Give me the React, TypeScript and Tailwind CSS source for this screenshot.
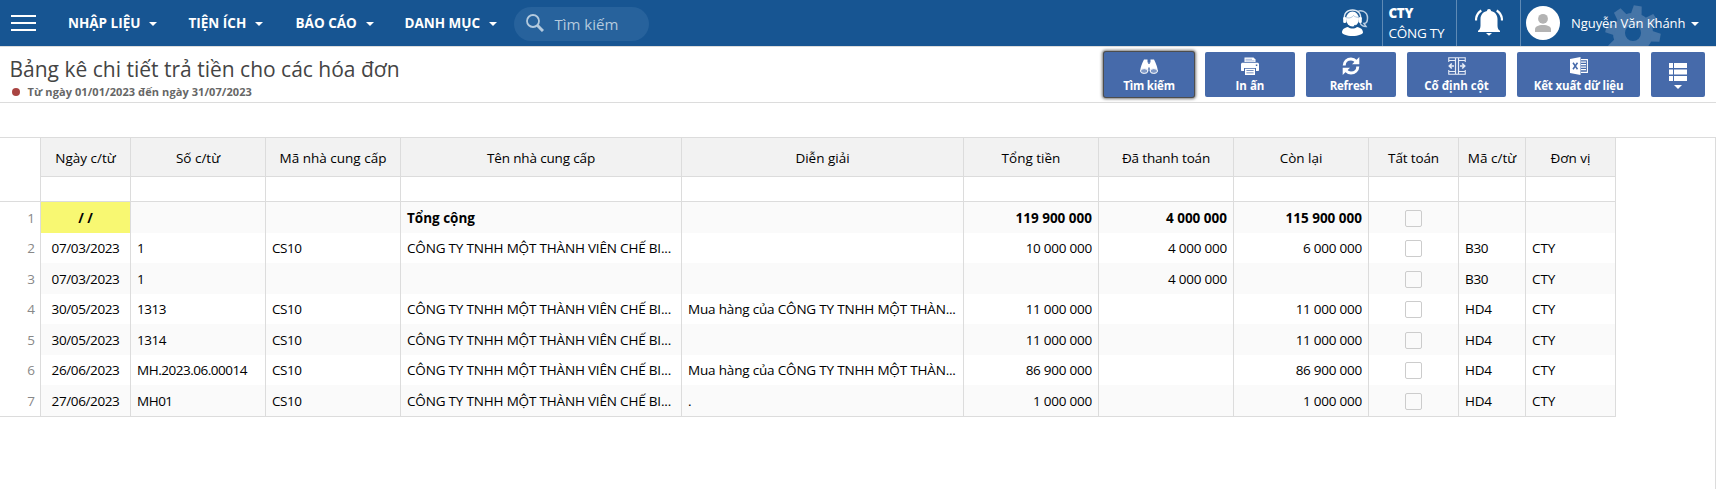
import React from "react";

function Caret({ className = "" }: { className?: string }) {
  return (
    <svg className={"shrink-0 " + className} width="8" height="4" viewBox="0 0 8 4" fill="currentColor">
      <path d="M0 0h8L4 4z" />
    </svg>
  );
}

function HeadsetIcon() {
  return (
    <svg width="28" height="28" viewBox="0 0 28 28" fill="none">
      <path d="M17 2.500c2-1.500 9.500-1 9.500 6.500 0 4-2 5.500-3.500 5.500l2 3c-3 0-5-1.500-6-3.500" stroke="#b9cde2" strokeWidth="1.500" />
      <ellipse cx="11.500" cy="10" rx="6.500" ry="7.500" fill="#fff" />
      <path d="M3.500 11C2.500 4.500 6 1 11.500 1s9 3.500 8 10" stroke="#dfe9f3" strokeWidth="1.400" />
      <path d="M6 8.800c3 .6 5.500-.6 6.500-2.300 1 1.300 3 1.800 5 1.800" stroke="#8fb0d0" strokeWidth="0.700" />
      <rect x="2.200" y="8" width="3" height="6" rx="1.300" fill="#fff" />
      <rect x="17.800" y="8" width="3" height="6" rx="1.300" fill="#fff" />
      <path d="M18.500 14c-.5 1.800-2.500 2.500-5.500 2.500" stroke="#175592" strokeWidth="0.800" />
      <path d="M1 23.500c0-3 2.500-5 6-5.500 2.500 2 6.500 2 9 0 3.500.5 6 2.500 6 5.500 0 1.500-4.500 3.500-10.500 3.500S1 25 1 23.500z" fill="#fff" />
    </svg>
  );
}

function BellIcon() {
  return (
    <svg width="28" height="27" viewBox="0 0 28 27" fill="#fff">
      <path d="M14 0c1.200 0 2 .8 2 2 4 .8 6.500 4 6.500 8v6.500c0 2.500.8 4.500 2.500 5.200v1.300H3v-1.300c1.700-.7 2.500-2.700 2.500-5.200V10c0-4 2.500-7.200 6.500-8 0-1.200.8-2 2-2z" />
      <path d="M11 24h6l-3 2.700z" />
      <path d="M1 11.500C1 7 3 3.500 6.300 1.500M27 11.500C27 7 25 3.500 21.700 1.500" fill="none" stroke="#fff" strokeWidth="2.200" />
    </svg>
  );
}

const teeth = [10, 55, 100, 145, 190, 235, 280, 325];

function GearBackdrop() {
  return (
    <svg className="absolute left-[84px] top-[5px]" width="56" height="41" viewBox="0 0 56 41">
      <g fill="#4675a7">
        <circle cx="28" cy="28" r="14" fill="none" stroke="#4675a7" strokeWidth="12" />
        {teeth.map((a) => (
          <path key={a} d="M22.500 10l1.500-9.500h8L33.500 10z" transform={`rotate(${a} 28 28)`} />
        ))}
      </g>
    </svg>
  );
}

function BinocularsIcon() {
  return (
    <svg width="18" height="15" viewBox="0 0 18 15" fill="#fff">
      <path d="M4 .5h3.500v3H8.300V12H.3C.3 8.500 2 4.500 4 .5zM14 .5h-3.500v3H9.700V12h8C17.700 8.500 16 4.500 14 .5z" />
      <rect x="7" y="5" width="4" height="3.500" />
      <ellipse cx="4.200" cy="12" rx="3.700" ry="2.400" fill="#7f98c6" stroke="#fff" strokeWidth="1" />
      <ellipse cx="13.800" cy="12" rx="3.700" ry="2.400" fill="#7f98c6" stroke="#fff" strokeWidth="1" />
    </svg>
  );
}

function PrinterIcon() {
  return (
    <svg width="18" height="18" viewBox="0 0 18 18" fill="#fff">
      <path d="M3.500 5V.6h9l2 2V5z" />
      <path d="M4.500 2.300h6.500M4.500 3.900h9" stroke="#8ea5d0" strokeWidth="0.800" />
      <path fillRule="evenodd" d="M1.500 5.800h15c.8 0 1.500.7 1.500 1.500V13c0 .6-.4 1-1 1h-2v-3H3v3H1c-.6 0-1-.4-1-1V7.300c0-.8.7-1.500 1.500-1.500zm13.300 1.700v1.500h1.500V7.500z" />
      <path fillRule="evenodd" d="M4 11.800h10V18H4zm1.400 1.400v.9h7.200v-.9zm0 2.200v.9h7.200v-.9z" />
    </svg>
  );
}

function RefreshIcon() {
  return (
    <svg width="18" height="18" viewBox="0 0 18 18" fill="none">
      <path d="M2.200 8.500C2.300 4.700 5.200 2 9 2c2 0 3.700.8 5 2.200" stroke="#fff" strokeWidth="3" />
      <path d="M17.300 0v7.300H10z" fill="#fff" />
      <path d="M15.800 9.500C15.700 13.300 12.800 16 9 16c-2 0-3.700-.8-5-2.200" stroke="#fff" strokeWidth="3" />
      <path d="M.7 18v-7.300H8z" fill="#fff" />
    </svg>
  );
}

function FreezeIcon() {
  return (
    <svg width="18" height="18" viewBox="0 0 18 18" fill="none" stroke="#e6ecf6">
      <path d="M.75 5V.75h16.500V5M.75 13v4.250h16.500V13M1 3.500h6.500M10.500 3.500H17M1 14.500h6.500M10.500 14.500H17" strokeWidth="1.100" />
      <path d="M7.500 1v16M10.500 1v16" strokeWidth="1.200" />
      <path d="M6 9H1.200M3.800 6.500L1.300 9l2.500 2.500M12 9h4.800M14.200 6.500L16.700 9l-2.500 2.500" strokeWidth="1.600" />
    </svg>
  );
}

function ExcelIcon() {
  return (
    <svg width="18" height="18" viewBox="0 0 18 18" fill="none">
      <path d="M0 2l10.500-2v18L0 16z" fill="#fff" />
      <path d="M11 2.600h6.400v12.800H11" stroke="#fff" strokeWidth="1.100" />
      <path d="M11 5.200h5M11 7.700h5M11 10.200h5M11 12.700h5" stroke="#fff" strokeWidth="1.300" />
      <path d="M3 5.800l4.500 6.500M7.500 5.800L3 12.300" stroke="#466aaa" strokeWidth="1.500" />
    </svg>
  );
}

function ListIcon() {
  return (
    <svg width="18" height="18" viewBox="0 0 18 18" fill="#fff">
      <path d="M0 0h4v5H0zM5 0h13v5H5zM0 6.500h4v5H0zM5 6.500h13v5H5zM0 13h4v5H0zM5 13h13v5H5z" />
    </svg>
  );
}

const menus = [
  { label: "NHẬP LIỆU", cls: "w-[120.500px]" },
  { label: "TIỆN ÍCH", cls: "w-[107px]" },
  { label: "BÁO CÁO", cls: "w-[109px]" },
  { label: "DANH MỤC", cls: "w-[109px]" },
];

const actions = [
  { label: "Tìm kiếm", icon: <BinocularsIcon />, cls: "w-[90px] shadow-[0_0_0_1px_#4d4d4d,0_0_3px_2px_#777] tracking-[-0.2px]" },
  { label: "In ấn", icon: <PrinterIcon />, cls: "w-[90px]" },
  { label: "Refresh", icon: <RefreshIcon />, cls: "w-[90px] tracking-[-0.2px]" },
  { label: "Cố định cột", icon: <FreezeIcon />, cls: "w-[99px]" },
  { label: "Kết xuất dữ liệu", icon: <ExcelIcon />, cls: "w-[123px] tracking-[-0.140px]" },
];

const headers = [
  "Ngày c/từ", "Số c/từ", "Mã nhà cung cấp", "Tên nhà cung cấp", "Diễn giải", "Tổng tiền",
  "Đã thanh toán", "Còn lại", "Tất toán", "Mã c/từ", "Đơn vị",
];

const vendor = "CÔNG TY TNHH MỘT THÀNH VIÊN CHẾ BI...";
const purchase = "Mua hàng của CÔNG TY TNHH MỘT THÀN...";

const rows: string[][] = [
  ["/ /", "", "", "Tổng cộng", "", "119 900 000", "4 000 000", "115 900 000", "", "", ""],
  ["07/03/2023", "1", "CS10", vendor, "", "10 000 000", "4 000 000", "6 000 000", "", "B30", "CTY"],
  ["07/03/2023", "1", "", "", "", "", "4 000 000", "", "", "B30", "CTY"],
  ["30/05/2023", "1313", "CS10", vendor, purchase, "11 000 000", "", "11 000 000", "", "HD4", "CTY"],
  ["30/05/2023", "1314", "CS10", vendor, "", "11 000 000", "", "11 000 000", "", "HD4", "CTY"],
  ["26/06/2023", "MH.2023.06.00014", "CS10", vendor, purchase, "86 900 000", "", "86 900 000", "", "HD4", "CTY"],
  ["27/06/2023", "MH01", "CS10", vendor, ".", "1 000 000", "", "1 000 000", "", "HD4", "CTY"],
];

const trackings = [
  "tracking-[-0.380px]", "tracking-[-0.480px]", "tracking-[-0.480px]", "tracking-[-0.180px]", "tracking-[-0.180px]",
  "tracking-[-0.240px]", "tracking-[-0.240px]", "tracking-[-0.240px]", "", "tracking-[-0.300px]", "tracking-[-0.100px]",
];

const columns =
  "grid grid-cols-[40px_90px_135px_135px_281px_282px_135px_135px_135px_90px_67px_91px] w-[1616px]";

function cellAlign(i: number) {
  if (i === 0 || i === 8) return "justify-center";
  if (i >= 5 && i <= 7) return "justify-end pr-1.5";
  return "pl-1.5";
}

export default function App() {
  return (
    <div className="flex h-[489px] w-[1716px] flex-col overflow-hidden bg-white font-['Open_Sans','Noto_Sans',sans-serif] text-[13.5px] text-black">
      <header className="flex h-[47px] shrink-0 items-stretch border-b border-[#dcdcdc] bg-[#175592] text-white">
        <button className="flex w-[68px] flex-col justify-center gap-[5px] pl-[11px]">
          <span className="h-0.5 w-[25px] bg-white" />
          <span className="h-0.5 w-[25px] bg-white" />
          <span className="h-0.5 w-[25px] bg-white" />
        </button>
        <nav className="flex items-center pt-px font-bold">
          {menus.map((m) => (
            <div key={m.label} className={"flex items-center whitespace-nowrap " + m.cls}>
              {m.label}
              <Caret className="ml-[9px]" />
            </div>
          ))}
        </nav>
        <div className="mt-[7px] flex h-[34px] w-[135px] items-center rounded-full bg-[#27629c] pl-3 text-[15px] text-[#b4cade]">
          <svg className="mb-0.5 mr-[11px]" width="18" height="18" viewBox="0 0 18 18" fill="none" stroke="currentColor">
            <circle cx="7" cy="7" r="6" strokeWidth="1.800" />
            <path d="M11.500 11.500l5.500 5.500" strokeWidth="3" />
          </svg>
          <span className="pt-px">Tìm kiếm</span>
        </div>
        <div className="ml-auto flex items-stretch">
          <div className="w-12 pl-[7px] pt-[9px]">
            <HeadsetIcon />
          </div>
          <div className="w-[74px] whitespace-nowrap border-l border-[#5f8ab5] pl-[5.500px] pt-[3px] leading-5">
            <div className="font-extrabold tracking-[-0.400px]">CTY</div>
            <div className="tracking-[-0.250px]">CÔNG TY</div>
          </div>
          <div className="w-16 border-l border-[#5f8ab5] pl-[18px] pt-[9px]">
            <BellIcon />
          </div>
          <div className="relative flex w-[196px] items-center border-l border-[#5f8ab5] pl-[5px]">
            <GearBackdrop />
            <svg className="relative shrink-0" width="34" height="34" viewBox="0 0 34 34">
              <circle cx="17" cy="17" r="17" fill="#fff" />
              <circle cx="17" cy="12.800" r="4.900" fill="#b3b3b3" />
              <path d="M9 26v-2.500c0-3 3-4.500 8-4.500s8 1.500 8 4.500V26z" fill="#b3b3b3" />
            </svg>
            <span className="relative ml-[11px] whitespace-nowrap pt-px text-[13px] tracking-[-0.060px]">Nguyễn Văn Khánh</span>
            <Caret className="relative ml-1.5 mt-0.5" />
          </div>
        </div>
      </header>

      <section className="flex h-14 shrink-0 justify-between border-b border-[#dcdcdc]">
        <div className="pl-[9.500px]">
          <h1 className="mt-2 text-[21px] leading-7 text-[#444]">Bảng kê chi tiết trả tiền cho các hóa đơn</h1>
          <div className="mt-px flex h-4 items-center pl-[2.500px] text-[11px] font-bold tracking-[0.080px] text-[#666]">
            <span className="mr-[7.500px] size-2 rounded-full bg-[#a94442]" />
            Từ ngày 01/01/2023 đến ngày 31/07/2023
          </div>
        </div>
        <div className="mr-[11px] mt-[5px] flex gap-[11px] text-[11.500px] font-bold text-white">
          {actions.map((a) => (
            <button key={a.label} className={"flex h-[45px] flex-col items-center rounded-[2px] bg-[#466aaa] pt-[5px] " + a.cls}>
              <span className="flex h-[18px] items-center">{a.icon}</span>
              <span className="mt-px whitespace-nowrap leading-5">{a.label}</span>
            </button>
          ))}
          <button className="flex h-[45px] w-[54px] flex-col items-center gap-1 rounded-[2px] bg-[#466aaa] pt-[11px]">
            <ListIcon />
            <Caret />
          </button>
        </div>
      </section>

      <main className="mt-[34px] flex-1 border-r border-t border-[#dcdcdc]">
        <div className={columns + " h-16 border-b border-[#dcdcdc]"}>
          <div />
          {headers.map((h, i) => (
            <div key={h} className={"flex flex-col border-l border-[#dcdcdc]" + (i === 10 ? " border-r" : "")}>
              <div
                className={
                  "flex h-[39px] items-center justify-center whitespace-nowrap border-b border-[#dcdcdc] bg-[#f2f2f2] pt-0.5" +
                  (i === 3 || i === 6 || i === 8 ? " tracking-[-0.150px]" : "")
                }
              >
                {h}
              </div>
            </div>
          ))}
        </div>
        {rows.map((row, r) => (
          <div key={r} className={columns + (r % 2 ? " h-[30px]" : " h-[31px]")}>
            <div className={"flex items-center justify-end pr-[5px] text-[#888]" + (r % 2 ? "" : " pt-px")}>{r + 1}</div>
            {row.map((text, i) => (
              <div
                key={i}
                className={[
                  "flex items-center whitespace-nowrap border-l border-[#dcdcdc]",
                  r % 2 ? "" : "pt-px",
                  cellAlign(i),
                  r === 0 ? "font-bold" : trackings[i],
                  r === 0 && i === 0 ? "bg-[#f8f872]" : r % 2 ? "bg-white" : "bg-[#fafafa]",
                  i === 10 ? "border-r" : "",
                ].join(" ")}
              >
                {i === 8 ? <span className="size-[17px] rounded-[2px] border border-[#ccc]" /> : text}
              </div>
            ))}
          </div>
        ))}
        <div className="h-px w-[1616px] bg-[#dcdcdc]" />
      </main>
    </div>
  );
}
